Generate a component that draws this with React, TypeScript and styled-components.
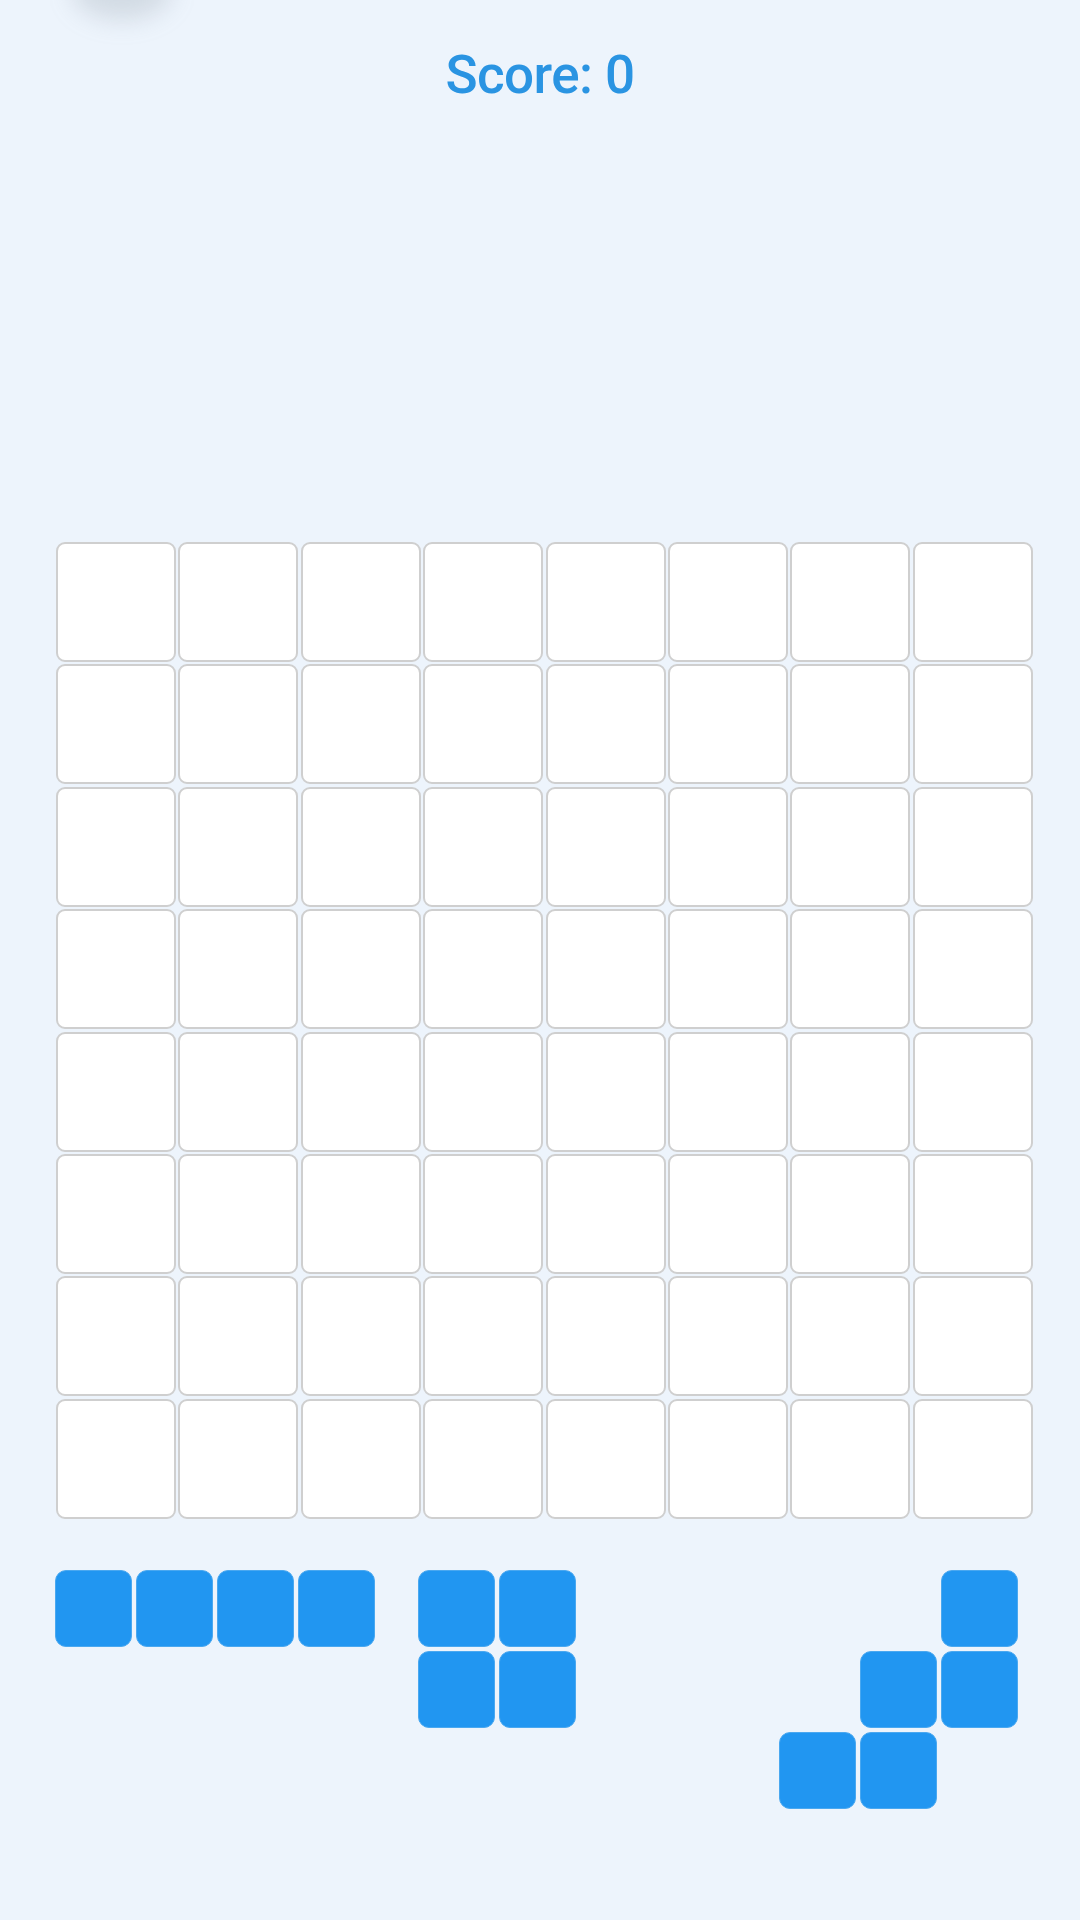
import styled, { createGlobalStyle } from "styled-components";

const GlobalStyle = createGlobalStyle`
html, body {
  margin: 0;
  padding: 0;
  background: #edf4fc;
  font-family: Roboto, "Noto Sans", sans-serif;
}
`;

const Page = styled.div`
position: relative;
width: 1080px;
height: 1920px;
overflow: hidden;
background: #edf4fc;
`;

const CornerShadow = styled.div`
position: absolute;
top: -40px;
left: 72px;
width: 100px;
height: 60px;
border-radius: 50%;
background: rgba(120, 130, 145, 0.22);
filter: blur(12px);
`;

const Score = styled.h1`
margin: 0;
padding-top: 38px;
text-align: center;
font-size: 53px;
font-weight: 500;
letter-spacing: -0.6px;
line-height: 74px;
color: #2a94e2;
`;

const Board = styled.div`
display: grid;
grid-template-columns: repeat(8, 120px);
grid-auto-rows: 120px;
gap: 2.4px;
width: 977px;
margin: 430px 0 0 56px;
`;

const Cell = styled.div`
box-sizing: border-box;
background: #ffffff;
border: 2px solid #cfcfcf;
border-radius: 9px;
`;

const Tray = styled.div`
display: grid;
grid-template-columns: 363px 361px auto;
align-items: start;
margin: 51px 0 0 55px;
`;

const Piece = styled.div<{ $cols: number }>`
display: grid;
grid-template-columns: repeat(${({ $cols }) => $cols}, 77px);
grid-auto-rows: 77px;
gap: 4px;
`;

const Block = styled.div<{ $on: boolean }>`
box-sizing: border-box;
border-radius: 11px;
background: ${({ $on }) => ($on ? "#2196f1" : "transparent")};
border: ${({ $on }) => ($on ? "1px solid #4aa8f0" : "none")};
`;

const pieces: { cols: number; shape: number[] }[] = [
  { cols: 4, shape: [1, 1, 1, 1] },
  { cols: 2, shape: [1, 1, 1, 1] },
  { cols: 3, shape: [0, 0, 1, 0, 1, 1, 1, 1, 0] },
];

export default function App() {
  return (
    <Page>
      <GlobalStyle />
      <CornerShadow />
      <Score>Score: 0</Score>
      <Board>
        {Array.from({ length: 64 }).map((_, i) => (
          <Cell key={i} />
        ))}
      </Board>
      <Tray>
        {pieces.map((p, i) => (
          <Piece key={i} $cols={p.cols}>
            {p.shape.map((v, j) => (
              <Block key={j} $on={v === 1} />
            ))}
          </Piece>
        ))}
      </Tray>
    </Page>
  );
}
